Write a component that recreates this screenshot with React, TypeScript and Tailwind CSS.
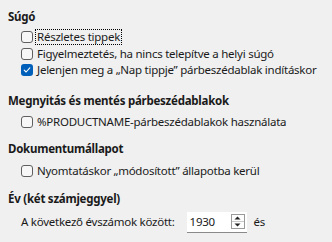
import React from 'react';

type Option = { label: string; checked?: boolean; focused?: boolean };

const Checkbox: React.FC<Option> = ({ label, checked, focused }) => (
  <label className="flex h-[16.5px] items-center whitespace-nowrap">
    {checked ? (
      <span className="flex h-[12px] w-[12px] shrink-0 items-center justify-center rounded-[3px] bg-[#005fb8]">
        <svg width="8" height="8" viewBox="0 0 8 8" fill="none">
          <path d="M1.2 4.2 L3.1 6 L6.8 1.8" stroke="white" strokeWidth="1.1" strokeLinecap="round" strokeLinejoin="round" />
        </svg>
      </span>
    ) : (
      <span className="h-[12px] w-[12px] shrink-0 rounded-[3px] border border-[#5f5f5f] bg-[#f7f7f7]" />
    )}
    <span
      className={
        focused
          ? 'ml-[3px] px-[1px] leading-[14px] outline outline-1 outline-dotted outline-black'
          : 'ml-[4px] leading-[14px]'
      }
    >
      {label}
    </span>
  </label>
);

const Heading: React.FC<{ children: React.ReactNode; className?: string }> = ({ children, className }) => (
  <div className={`h-4 whitespace-nowrap font-bold leading-4 ${className ?? ''}`}>{children}</div>
);

export default function App() {
  return (
    <div className="h-[242px] w-[332px] overflow-hidden bg-[#f0f0f0] pl-[8px] pt-[9px] text-[11.5px] tracking-[-0.25px] text-[#1a1a1a] [font-family:'Noto_Sans','Open_Sans',sans-serif]">
      <Heading>Súgó</Heading>
      <div className="mt-[4px] pl-[13px]">
        <Checkbox label="Részletes tippek" focused />
        <Checkbox label="Figyelmeztetés, ha nincs telepítve a helyi súgó" />
        <Checkbox label="Jelenjen meg a „Nap tippje” párbeszédablak indításkor" checked />
      </div>

      <Heading className="mt-[14px]">Megnyitás és mentés párbeszédablakok</Heading>
      <div className="mt-[5px] pl-[13px]">
        <Checkbox label="%PRODUCTNAME-párbeszédablakok használata" />
      </div>

      <Heading className="mt-[11px]">Dokumentumállapot</Heading>
      <div className="mt-[6px] pl-[13px]">
        <Checkbox label="Nyomtatáskor „módosított” állapotba kerül" />
      </div>

      <Heading className="mt-[11px]">Év (két számjeggyel)</Heading>
      <div className="mt-[5px] flex h-[21px] items-center whitespace-nowrap pl-[13px]">
        <span>A következő évszámok között:</span>
        <div className="ml-[12px] flex h-[21px] w-[60px] items-center justify-between border-b border-[#8a8a8a] bg-white pl-[3px] pr-[2px]">
          <span>1930</span>
          <div className="flex h-[15px] w-[14px] flex-col border border-[#9a9a9a] bg-[#fdfdfd]">
            <div className="flex flex-1 items-center justify-center border-b border-[#c8c8c8]">
              <svg width="7" height="4" viewBox="0 0 7 4"><path d="M0.5 3.5 L3.5 0.5 L6.5 3.5 Z" fill="#222" /></svg>
            </div>
            <div className="flex flex-1 items-center justify-center">
              <svg width="7" height="4" viewBox="0 0 7 4"><path d="M0.5 0.5 L3.5 3.5 L6.5 0.5 Z" fill="#222" /></svg>
            </div>
          </div>
        </div>
        <span className="ml-[7px]">és</span>
      </div>
    </div>
  );
}
